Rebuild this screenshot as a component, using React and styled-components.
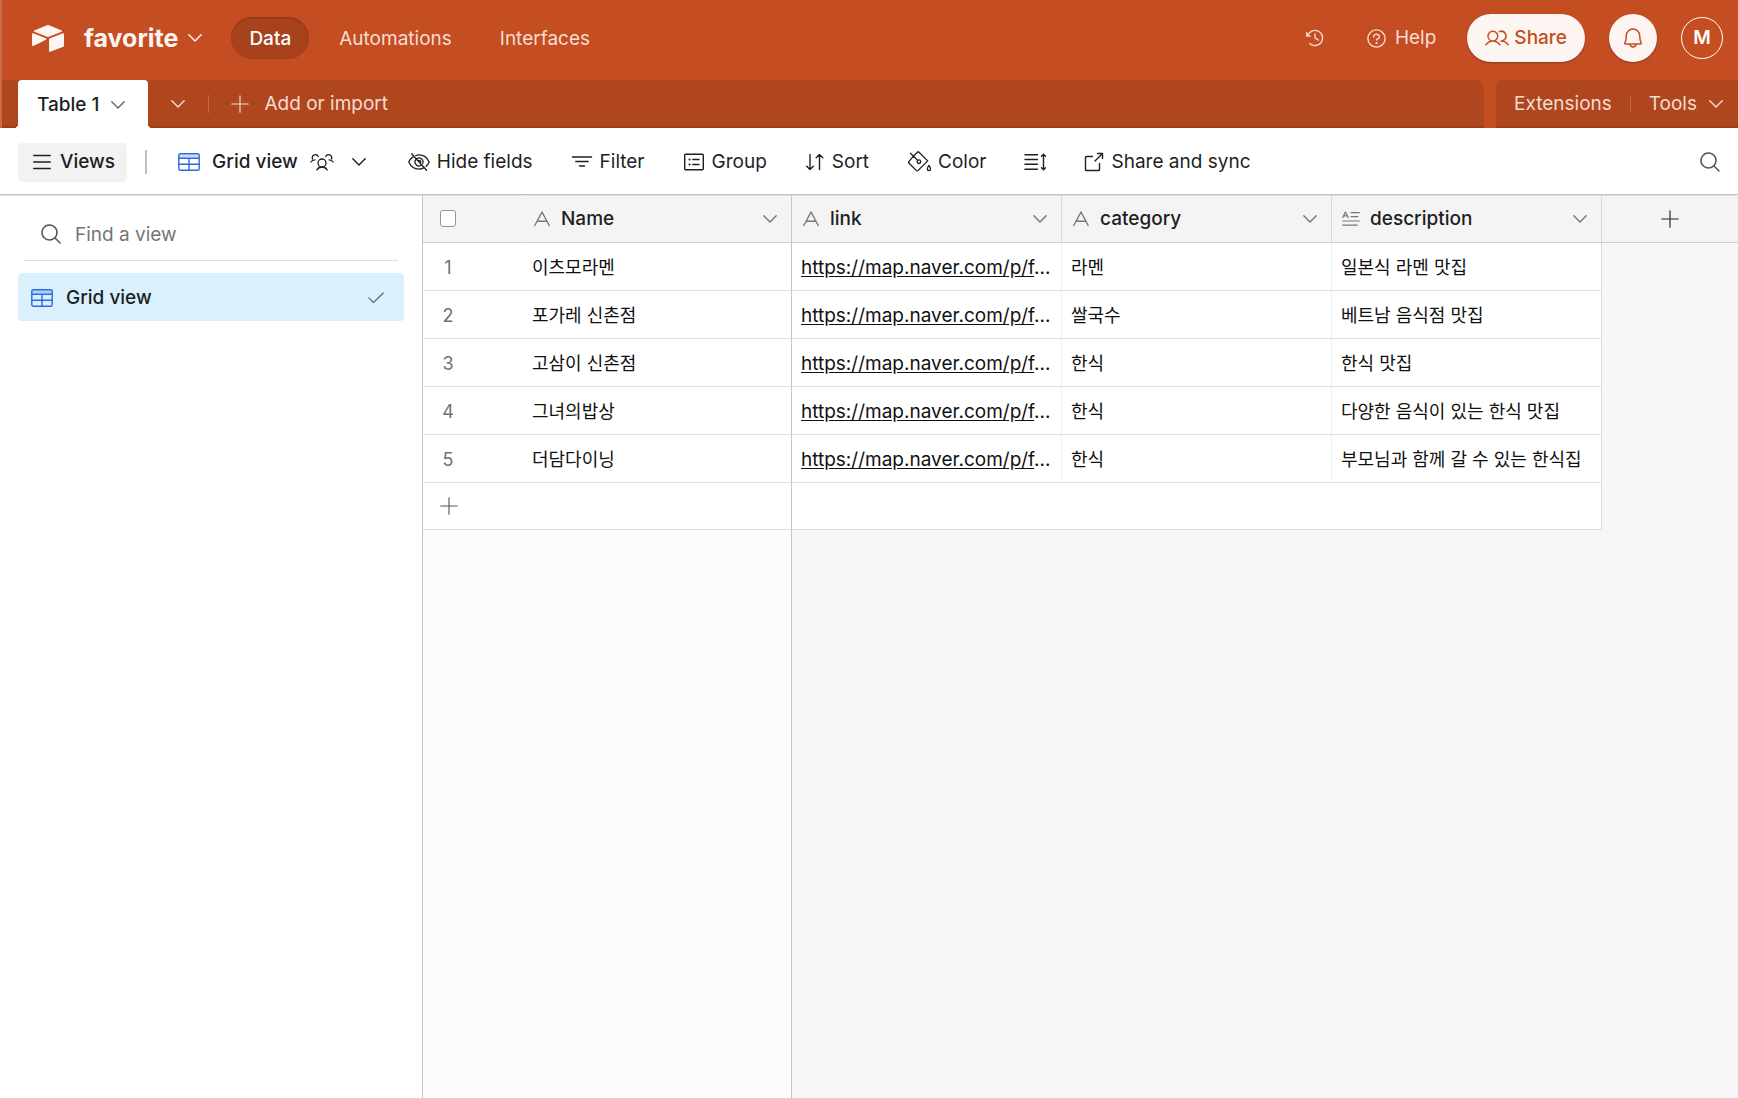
import styled, { createGlobalStyle, css } from 'styled-components';
import {
	PiBell,
	PiClockCounterClockwise,
	PiMagnifyingGlass,
	PiPlusLight,
	PiQuestion,
	PiUsers,
} from 'react-icons/pi';

const GlobalStyle = createGlobalStyle`
  *,
  *::before,
  *::after {
    box-sizing: border-box;
  }

  body {
    margin: 0;
    background: #fff;
    color: #1d1f25;
    font-family: Inter, 'Noto Sans CJK KR', sans-serif;
    font-size: 19px;
    line-height: 24px;
  }

  button,
  input {
    margin: 0;
    padding: 0;
    border: 0;
    background: none;
    color: inherit;
    font: inherit;
  }

  a {
    color: inherit;
  }

  svg {
    display: block;
    flex: none;
  }
`;

const Page = styled.div`
  display: flex;
  flex-direction: column;
  min-height: 100vh;
`;

/* ---------- icons ---------- */

const Stroke = styled.svg.attrs({ fill: 'none', stroke: 'currentColor', 'aria-hidden': true })`
  stroke-width: ${({ $weight }) => $weight || 1.4};
  stroke-linecap: round;
  stroke-linejoin: round;
`;

const Logo = () => (
	<svg width="32" height="27" viewBox="11 10 177 149" fill="currentColor" aria-hidden="true">
		<path d="M90.04 12.37 24.08 39.66c-3.67 1.52-3.63 6.73.06 8.19l66.24 26.27a24.58 24.58 0 0 0 18.12 0l66.23-26.27c3.69-1.46 3.73-6.67.06-8.19l-65.96-27.29a24.58 24.58 0 0 0-18.79 0" />
		<path d="M105.31 88.46v65.62c0 3.12 3.15 5.26 6.05 4.1l73.81-28.64a4.42 4.42 0 0 0 2.79-4.11V59.81c0-3.12-3.15-5.25-6.05-4.1L108.1 84.35a4.42 4.42 0 0 0-2.79 4.11" />
		<path d="m88.08 91.85-21.91 10.57-2.22 1.08-46.24 22.15c-2.93 1.42-6.67-.72-6.67-3.98V60.09c0-1.18.6-2.2 1.41-2.96.34-.34.72-.62 1.12-.84 1.11-.66 2.68-.84 4.02-.31l70.12 27.78c3.56 1.41 3.84 6.41.37 8.09" />
	</svg>
);

const Caret = () => (
	<Stroke width="14" height="8" viewBox="0 0 14 8">
		<path d="M.8.8 7 7 13.200.8" />
	</Stroke>
);

const Menu = () => (
	<Stroke width="18" height="16" viewBox="0 0 18 16" $weight={1.6}>
		<path d="M.8 1.500h16.400M.8 8h16.400M.8 14.500h16.400" />
	</Stroke>
);

const Grid = () => (
	<Stroke width="22" height="18" viewBox="0 0 22 18">
		<path d="M1 3h20" opacity=".25" strokeWidth="3" />
		<rect x=".8" y=".8" width="20.400" height="16.400" rx="1.500" />
		<path d="M.8 5.200h20.400M.8 11.200h20.400M11 5.200v12" />
	</Stroke>
);

const Collaborators = () => (
	<Stroke width="24" height="18" viewBox="0 0 24 18" $weight={1.3}>
		<circle cx="12" cy="10" r="4" />
		<path d="M6.800 17a6 6 0 0 1 10.400 0M.8 9c.9-1.400 2.400-2.200 4.200-2.200M2.600 6A3 3 0 1 1 8.300 3.600M23.200 9c-.9-1.400-2.400-2.200-4.200-2.200M21.400 6A3 3 0 1 0 15.700 3.600" />
	</Stroke>
);

const EyeSlash = () => (
	<Stroke width="22" height="18" viewBox="0 0 22 18" $weight={1.3}>
		<path d="M7.800 2.500C8.800 2.100 9.900 1.900 11 1.900c5.500 0 8.800 3.900 10.200 7.100-.6 1.400-1.700 3-3.200 4.300M15.600 14.900c-1.400.8-2.900 1.200-4.600 1.200C5.500 16.100 2.200 12.200.8 9c.7-1.700 2.100-3.700 4.200-5.100" />
		<path d="M9.300 5.400a4 4 0 0 1 5.500 4.900M13.500 12.100A4 4 0 0 1 7.900 6.500M11 7.300a1.800 1.800 0 0 1 1.800 1.700M3.600.8l15 16.400" />
	</Stroke>
);

const Filter = () => (
	<Stroke width="22" height="18" viewBox="0 0 22 18" $weight={1.5}>
		<path d="M1.500 4h19M4.800 8.500h12.400M8.500 13h5" />
	</Stroke>
);

const Group = () => (
	<Stroke width="22" height="18" viewBox="0 0 22 18">
		<rect x="1.700" y="1.200" width="18.600" height="15.600" rx="1" />
		<path d="M9.800 6.500h6.200M9.800 11.500h6.200" />
		<path d="M6.500 6.500h.1M6.500 11.500h.1" strokeWidth="2" />
	</Stroke>
);

const Sort = () => (
	<Stroke width="20" height="18" viewBox="0 0 20 18">
		<path d="M5 1.500v15M1.700 13.300 5 16.500l3.300-3.200M14.500 16.500v-15M11.200 4.700l3.300-3.200 3.300 3.200" />
	</Stroke>
);

const PaintBucket = () => (
	<Stroke width="24" height="22" viewBox="0 0 24 22" $weight={1.3}>
		<path d="m6.200 5.400 4.200-4.200c.5-.5 1.100-.5 1.600 0l8.700 8.700-9.500 9.500c-.6.6-1.400.6-2 0L2.100 12.300c-.6-.6-.6-1.400 0-2l4.100-4.900M3.500 2.200l7.200 7.200" />
		<circle cx="11.900" cy="10.700" r="1.800" />
		<path d="M22 14.400c1 1.500 1.500 2.500 1.500 3.500a1.600 1.600 0 0 1-3.200 0c0-1 .6-2 1.700-3.500Z" />
	</Stroke>
);

const RowHeight = () => (
	<Stroke width="22" height="18" viewBox="0 0 22 18">
		<path d="M1 1.700h12.500M1 6.500h12.500M1 11.300h12.500M1 16.200h12.500M19.500 1.500v15M17.500 3.300l2-2 2 2M17.500 14.700l2 2 2-2" />
	</Stroke>
);

const External = () => (
	<Stroke width="20" height="20" viewBox="0 0 20 20">
		<path d="M8.500 4.500H2.300c-.5 0-.8.3-.8.8v12.400c0 .5.300.8.8.8h12.400c.5 0 .8-.3.8-.8v-6.200M13.500 1.500h5v5M11 9l7.500-7.500" />
	</Stroke>
);

const Check = () => (
	<Stroke width="16" height="12" viewBox="0 0 16 12" $weight={1.2}>
		<path d="m.8 5.800 4.700 4.700L15.200 1" />
	</Stroke>
);

const TextField = () => (
	<Stroke width="18" height="16" viewBox="0 0 18 16">
		<path d="M1.800 14.500 9 1l7.200 13.500M4.300 10.200h9.400" />
	</Stroke>
);

const LongTextField = () => (
	<Stroke width="18" height="16" viewBox="0 0 18 16" $weight={1.2}>
		<path d="M.7 6.500 3.500 1l2.800 5.500M1.600 4.900h3.800M9.200 1.700h8.100M9.200 5.700h6.500M.7 10h16.600M.7 14.200h14.500" />
	</Stroke>
);

/* ---------- top bar ---------- */

const Header = styled.header`
  flex: none;
  border-left: 2px solid #cd6b48;
  background: #c54d22;
  color: #fcf5f2;
`;

const TopBar = styled.div`
  display: flex;
  align-items: center;
  height: 80px;
  padding: 0 15px 4px 30px;
`;

const BaseName = styled.button`
  display: flex;
  align-items: center;
  gap: 10px;
  margin-left: 20px;
  font-size: 25px;
  font-weight: 700;
`;

const Nav = styled.nav`
  display: flex;
  align-items: center;
  gap: 12px;
  margin-left: 29px;
`;

const NavLink = styled.a`
  height: 42px;
  padding: 10px 18px 8px;
  border-radius: 21px;
  text-decoration: none;
  color: #f6ddd3;

  ${({ $active }) => $active && css`
    background: #a8421d;
    color: #fff;
    box-shadow: inset 0 1px 2px rgba(0, 0, 0, 0.2);
    font-weight: 500;
  `}
`;

const Actions = styled.div`
  display: flex;
  align-items: center;
  margin-left: auto;
`;

const PlainAction = styled.button`
  display: flex;
  align-items: center;
  gap: 7px;
  margin-right: ${({ $after }) => $after}px;
  color: #f6ddd3;
`;

const Share = styled.button`
  display: flex;
  align-items: center;
  gap: 5px;
  height: 48px;
  padding: 0 18px;
  border-radius: 24px;
  background: #fcf5f2;
  box-shadow: 0 1px 2px rgba(0, 0, 0, 0.3);
  color: #c54d22;
  font-weight: 500;
`;

const Bell = styled(Share)`
  justify-content: center;
  width: 48px;
  margin: 0 24px;
  padding: 0;
`;

const Avatar = styled.button`
  width: 42px;
  height: 42px;
  border: 1px solid #fff;
  border-radius: 50%;
  color: #fff;
  font-weight: 600;
`;

/* ---------- table tabs ---------- */

const TabBar = styled.div`
  display: flex;
  gap: 12px;
  height: 48px;
`;

const TabGroup = styled.div`
  display: flex;
  align-items: center;
  background: #b0461e;
  box-shadow: inset 0 -3px 3px -2px rgba(0, 0, 0, 0.2);
  color: #f3dcd2;

  ${({ $side }) => ($side === 'left'
		? css`
      flex: 1;
      padding-left: 16px;
      border-radius: 0 8px 0 0;
    `
		: css`
      gap: 18px;
      padding: 0 15px 0 18px;
      border-radius: 8px 0 0 0;
    `)}
`;

const Tab = styled.button`
  position: relative;
  display: flex;
  align-items: center;
  gap: 12px;
  height: 48px;
  padding: 2px 23px 0 19px;
  border-radius: 4px 4px 0 0;
  background: #fff;
  color: #1d1f25;
  font-weight: 500;

  svg {
    color: #666;
  }

  /* flared feet where the tab meets the toolbar */
  &::before,
  &::after {
    content: '';
    position: absolute;
    bottom: 0;
    width: 4px;
    height: 4px;
  }

  &::before {
    right: 100%;
    background: radial-gradient(circle at 0 0, transparent 4px, #fff 4px);
  }

  &::after {
    left: 100%;
    background: radial-gradient(circle at 100% 0, transparent 4px, #fff 4px);
  }
`;

const TabButton = styled.button`
  display: flex;
  align-items: center;
  gap: ${({ $gap }) => $gap || 0}px;
  height: 48px;
`;

const TabList = styled(TabButton)`
  padding: 0 23px;
`;

const TabDivider = styled.span`
  width: 1px;
  height: 18px;
  margin-right: ${({ $after }) => $after || 0}px;
  background: #c0694a;
`;

/* ---------- view toolbar ---------- */

const Toolbar = styled.div`
  display: flex;
  flex: none;
  align-items: center;
  height: 67px;
  padding: 2px 16px 0 18px;
  border-bottom: 1px solid #c2c2c2;
`;

const ViewsButton = styled.button`
  display: flex;
  align-items: center;
  gap: 9px;
  height: 39px;
  padding: 0 12px 0 15px;
  border-radius: 4px;
  background: #f2f2f2;
  font-weight: 500;
`;

const Divider = styled.span`
  width: 2px;
  height: 24px;
  margin: 0 31px 0 18px;
  background: #c0c0c0;
`;

const ViewName = styled.button`
  display: flex;
  align-items: center;
  gap: 12px;
  margin-right: 42px;
  font-weight: 500;

  svg:first-child {
    color: #2d6ae0;
  }

  svg:last-child {
    margin-left: 6px;
  }
`;

const Tools = styled.div`
  display: flex;
  align-items: center;
  gap: 38px;
`;

const Tool = styled.button`
  display: flex;
  align-items: center;
  gap: 7px;
`;

const SearchButton = styled.button`
  margin-left: auto;
  color: #555;
`;

/* ---------- sidebar ---------- */

const Body = styled.main`
  display: flex;
  flex: 1;
`;

const Sidebar = styled.aside`
  flex: none;
  width: 423px;
  padding: 12px 18px;
  border-right: 1px solid #c6c6c6;
  box-shadow: inset 0 1px #e4e4e4;
`;

const FindView = styled.label`
  display: flex;
  align-items: center;
  gap: 12px;
  height: 54px;
  margin: 0 6px 12px;
  padding-left: 15px;
  border-bottom: 1px solid #e0e0e0;
  color: #555;

  input {
    flex: 1;
    padding-top: 2px;
    outline: none;
  }

  input::placeholder {
    color: #757575;
    opacity: 1;
  }
`;

const ViewItem = styled.button`
  display: flex;
  align-items: center;
  gap: 13px;
  width: 100%;
  height: 48px;
  padding: 1px 20px 0 13px;
  border-radius: 4px;
  background: #daf0fd;
  font-weight: 500;

  svg:first-child {
    color: #2d6ae0;
  }

  svg:last-child {
    margin-left: auto;
    color: #666;
  }
`;

/* ---------- records ---------- */

const GridPane = styled.section`
  display: flex;
  flex: 1;
  flex-direction: column;
  min-width: 0;
  background: #f7f7f7;
`;

const Table = styled.table`
  width: 100%;
  border-spacing: 0;
  table-layout: fixed;
`;

const HeadCell = styled.th`
  height: 48px;
  padding: 0;
  border-right: 1px solid ${({ $edge }) => $edge || '#f4f4f4'};
  border-bottom: 1px solid #cfcfcf;
  background: #f4f4f4;
  box-shadow: inset 0 1px #e0e0e0;
  font-weight: 500;
  text-align: left;
`;

const FieldHead = styled.div`
  display: flex;
  align-items: center;
  gap: 10px;
  padding: 1px 14px 0 10px;

  svg {
    color: #777;
  }

  svg:last-child {
    margin-left: auto;
  }
`;

const CheckAll = styled.input.attrs({ type: 'checkbox' })`
  display: block;
  width: 16px;
  height: 17px;
  margin-left: 17px;
  border: 1px solid #8f979e;
  border-radius: 3px;
  appearance: none;
  background: #fff;
`;

const AddField = styled.button`
  display: flex;
  margin: 0 auto;
  color: #222;
`;

const Cell = styled.td`
  height: 48px;
  padding: 2px 9px 0;
  overflow: hidden;
  border-right: 1px solid ${({ $edge }) => $edge || '#fff'};
  border-bottom: 1px solid #dedede;
  background: #fff;
  color: #111;
  font-size: 18px;
  white-space: nowrap;
`;

const LinkCell = styled(Cell)`
  font-size: 19px;

  a {
    text-underline-offset: 2px;
  }
`;

const NumberCell = styled(Cell)`
  padding: 2px 50px 0 0;
  border-right: 0;
  color: #707070;
  text-align: center;
`;

const AddCell = styled(Cell)`
  height: 47px;
  padding-top: 0;
`;

const AddRecord = styled.button`
  display: flex;
  margin-left: 5px;
  color: #555;
`;

const EmptyCell = styled.td`
  padding: 0;
`;

const Empty = styled.div`
  flex: 1;
  width: 369px;
  border-right: 1px solid #c6c6c6;
  background: #fcfcfc;
`;

const FROZEN_EDGE = '#c6c6c6';
const HEAD_EDGE = '#dadada';
const CELL_EDGE = '#efefef';

const fields = [
	{ name: 'Name', icon: <TextField />, edge: FROZEN_EDGE },
	{ name: 'link', icon: <TextField />, edge: HEAD_EDGE },
	{ name: 'category', icon: <TextField />, edge: HEAD_EDGE },
	{ name: 'description', icon: <LongTextField />, edge: HEAD_EDGE },
];

const records = [
	{ name: '이츠모라멘', category: '라멘', description: '일본식 라멘 맛집' },
	{ name: '포가레 신촌점', category: '쌀국수', description: '베트남 음식점 맛집' },
	{ name: '고삼이 신촌점', category: '한식', description: '한식 맛집' },
	{ name: '그녀의밥상', category: '한식', description: '다양한 음식이 있는 한식 맛집' },
	{ name: '더담다이닝', category: '한식', description: '부모님과 함께 갈 수 있는 한식집' },
];

const tools = [
	{ label: 'Hide fields', icon: <EyeSlash /> },
	{ label: 'Filter', icon: <Filter /> },
	{ label: 'Group', icon: <Group /> },
	{ label: 'Sort', icon: <Sort /> },
	{ label: 'Color', icon: <PaintBucket /> },
	{ title: 'Row height', icon: <RowHeight /> },
	{ label: 'Share and sync', icon: <External /> },
];

function AppHeader() {
	return (
		<Header>
			<TopBar>
				<Logo />
				<BaseName>favorite <Caret /></BaseName>
				<Nav>
					<NavLink href="#data" $active>Data</NavLink>
					<NavLink href="#automations">Automations</NavLink>
					<NavLink href="#interfaces">Interfaces</NavLink>
				</Nav>
				<Actions>
					<PlainAction $after={39} aria-label="History"><PiClockCounterClockwise size={22} /></PlainAction>
					<PlainAction $after={31}><PiQuestion size={23} />Help</PlainAction>
					<Share><PiUsers size={24} />Share</Share>
					<Bell aria-label="Notifications"><PiBell size={24} /></Bell>
					<Avatar>M</Avatar>
				</Actions>
			</TopBar>
			<TabBar>
				<TabGroup $side="left">
					<Tab>Table 1 <Caret /></Tab>
					<TabList aria-label="All tables"><Caret /></TabList>
					<TabDivider $after={19} />
					<TabButton $gap={12}><PiPlusLight size={24} />Add or import</TabButton>
				</TabGroup>
				<TabGroup $side="right">
					<TabButton>Extensions</TabButton>
					<TabDivider />
					<TabButton $gap={12}>Tools <Caret /></TabButton>
				</TabGroup>
			</TabBar>
		</Header>
	);
}

function ViewToolbar() {
	return (
		<Toolbar>
			<ViewsButton><Menu />Views</ViewsButton>
			<Divider />
			<ViewName><Grid />Grid view<Collaborators /><Caret /></ViewName>
			<Tools>
				{tools.map(({ label, title, icon }) => (
					<Tool key={label || title} aria-label={title}>{icon}{label}</Tool>
				))}
			</Tools>
			<SearchButton aria-label="Search"><PiMagnifyingGlass size={24} /></SearchButton>
		</Toolbar>
	);
}

function Records() {
	return (
		<GridPane>
			<Table>
				<colgroup>
					<col width="100" />
					<col width="269" />
					<col width="270" />
					<col width="270" />
					<col width="270" />
					<col />
				</colgroup>
				<thead>
					<tr>
						<HeadCell><CheckAll aria-label="Select all records" /></HeadCell>
						{fields.map(({ name, icon, edge }) => (
							<HeadCell key={name} $edge={edge}>
								<FieldHead>{icon}{name}<Caret /></FieldHead>
							</HeadCell>
						))}
						<HeadCell><AddField aria-label="Add field"><PiPlusLight size={24} /></AddField></HeadCell>
					</tr>
				</thead>
				<tbody>
					{records.map(({ name, category, description }, index) => (
						<tr key={name}>
							<NumberCell>{index + 1}</NumberCell>
							<Cell $edge={FROZEN_EDGE}>{name}</Cell>
							<LinkCell $edge={CELL_EDGE}><a href="https://map.naver.com/p/favorite">https://map.naver.com/p/f</a>...</LinkCell>
							<Cell $edge={CELL_EDGE}>{category}</Cell>
							<Cell $edge={HEAD_EDGE}>{description}</Cell>
							<EmptyCell />
						</tr>
					))}
					<tr>
						<AddCell colSpan={2} $edge={FROZEN_EDGE}>
							<AddRecord aria-label="Add record"><PiPlusLight size={24} /></AddRecord>
						</AddCell>
						<AddCell colSpan={3} $edge={HEAD_EDGE} />
						<EmptyCell />
					</tr>
				</tbody>
			</Table>
			<Empty />
		</GridPane>
	);
}

export default function App() {
	return (
		<Page>
			<GlobalStyle />
			<AppHeader />
			<ViewToolbar />
			<Body>
				<Sidebar>
					<FindView>
						<PiMagnifyingGlass size={24} />
						<input type="text" placeholder="Find a view" />
					</FindView>
					<ViewItem><Grid />Grid view<Check /></ViewItem>
				</Sidebar>
				<Records />
			</Body>
		</Page>
	);
}
